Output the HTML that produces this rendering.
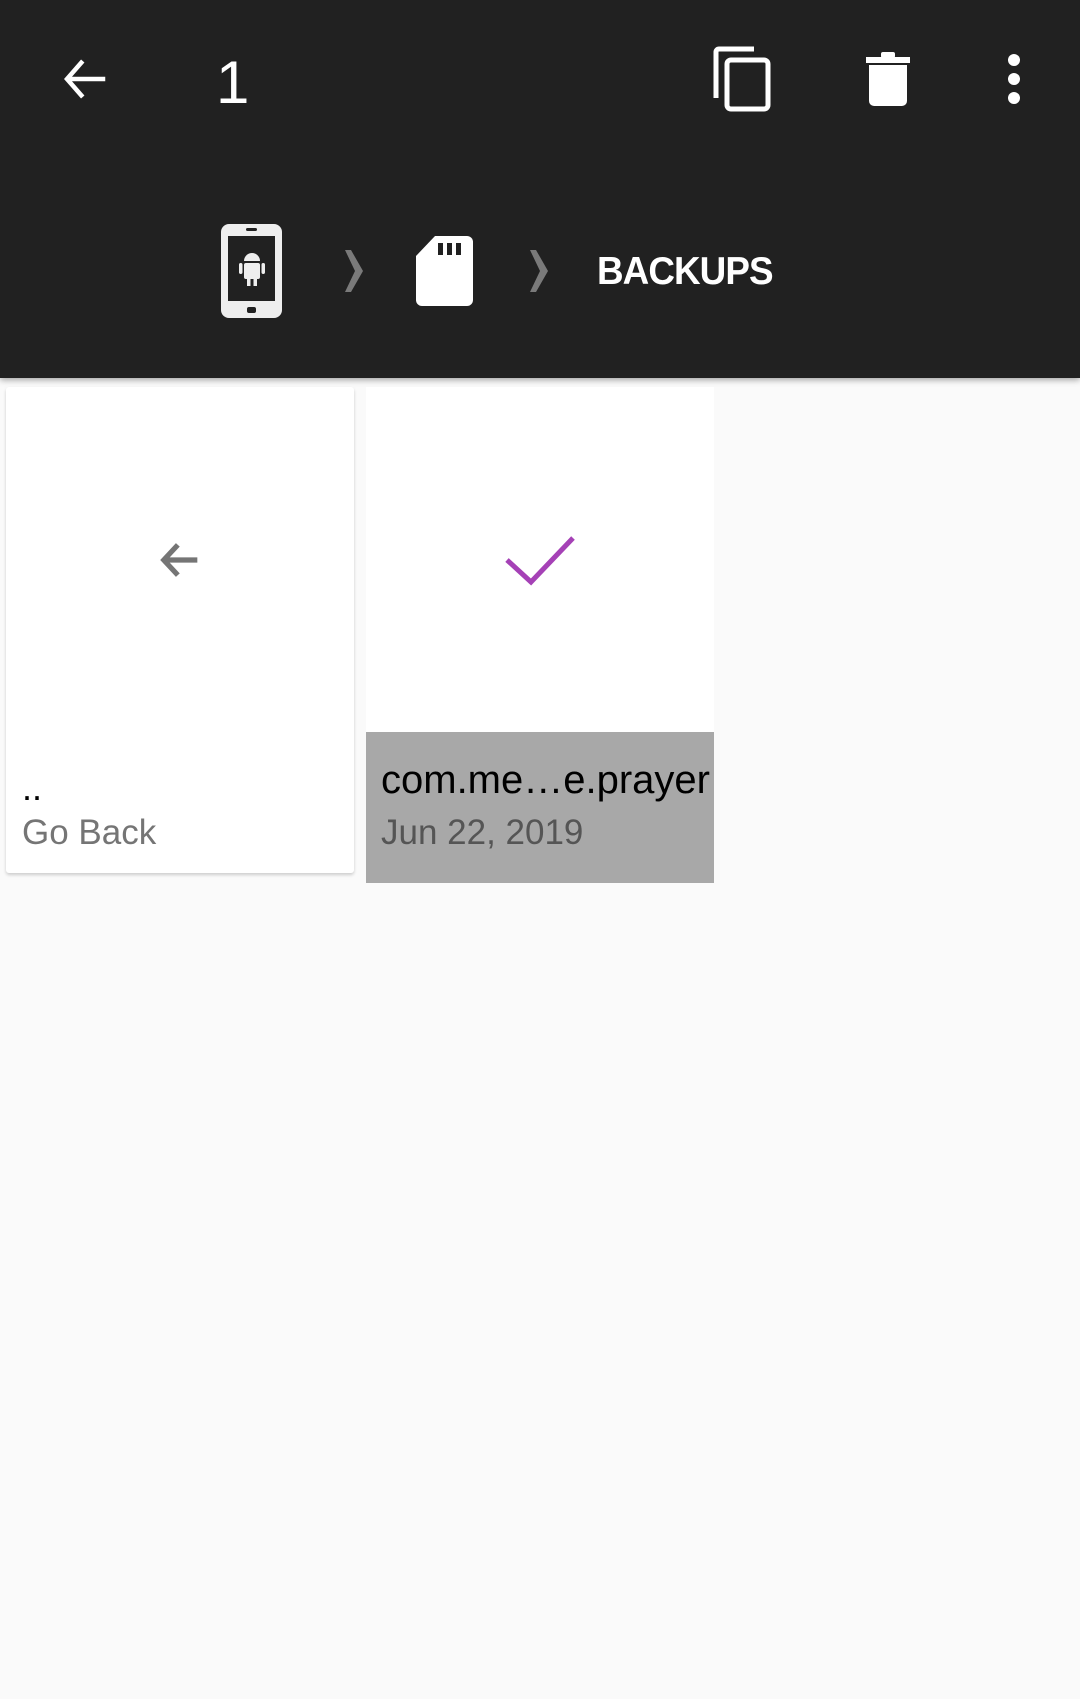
<!DOCTYPE html>
<html><head><meta charset="utf-8"><style>
body{margin:0;width:1080px;height:1699px;background:#fafafa;font-family:"Liberation Sans",sans-serif;position:relative;overflow:hidden}
.hdr{position:absolute;left:0;top:0;width:1080px;height:378px;background:#212121;box-shadow:0 2px 6px rgba(0,0,0,.35)}
.a{position:absolute}
.card{position:absolute;top:387px;width:348px;background:#fff}
</style></head><body>
<div class="hdr">
<svg class="a" style="left:58px;top:52px" width="54" height="54" viewBox="0 0 24 24"><path d="M21 12H4M11 4L4 12l7 8" stroke="#fff" stroke-width="2" fill="none"/></svg>
<div class="a" style="left:216px;top:48px;color:#fff;font-size:60px">1</div>
<svg class="a" style="left:712px;top:46px" width="60" height="66" viewBox="0 0 60 66"><path d="M4 52V6a3 3 0 0 1 3-3h35" stroke="#fff" stroke-width="5" fill="none"/><rect x="15" y="14" width="41" height="49" rx="4" stroke="#fff" stroke-width="5" fill="none"/></svg>
<svg class="a" style="left:866px;top:52px" width="44" height="54" viewBox="0 0 44 54"><rect x="0" y="5" width="44" height="6" fill="#fff"/><rect x="15" y="0" width="14" height="6" rx="2" fill="#fff"/><path d="M3 13h38v36a5 5 0 0 1-5 5H8a5 5 0 0 1-5-5z" fill="#fff"/></svg>
<svg class="a" style="left:1006px;top:54px" width="16" height="50" viewBox="0 0 16 50"><ellipse cx="8" cy="6" rx="6" ry="6" fill="#fff"/><ellipse cx="8" cy="25" rx="6" ry="6" fill="#fff"/><ellipse cx="8" cy="44" rx="6" ry="6" fill="#fff"/></svg>
<svg class="a" style="left:220px;top:223px" width="63" height="96" viewBox="0 0 63 96"><rect x="1" y="1" width="61" height="94" rx="8" fill="#eee"/><rect x="8" y="13" width="47" height="65" fill="#212121"/><rect x="26" y="5" width="11" height="3" rx="1.5" fill="#212121"/><rect x="27" y="84" width="9" height="6" rx="2" fill="#212121"/><path d="M24 38a8 8 0 0 1 16 0z" fill="#eee"/><rect x="24" y="40" width="16" height="16" rx="2" fill="#eee"/><rect x="19" y="40" width="3.5" height="11" rx="1.7" fill="#eee"/><rect x="41.5" y="40" width="3.5" height="11" rx="1.7" fill="#eee"/><rect x="27" y="55" width="3.5" height="8" fill="#eee"/><rect x="33.5" y="55" width="3.5" height="8" fill="#eee"/></svg>
<svg class="a" style="left:343px;top:250px" width="22" height="42" viewBox="0 0 22 42"><path d="M2 0h6l12 21L8 42H2l10-21z" fill="#7a7a7a"/></svg>
<svg class="a" style="left:416px;top:236px" width="57" height="70" viewBox="0 0 57 70"><path d="M19 0h32a6 6 0 0 1 6 6v58a6 6 0 0 1-6 6H6a6 6 0 0 1-6-6V20z" fill="#fff"/><rect x="22" y="7" width="5" height="12" fill="#212121"/><rect x="31" y="7" width="5" height="12" fill="#212121"/><rect x="40" y="7" width="5" height="12" fill="#212121"/></svg>
<svg class="a" style="left:528px;top:250px" width="22" height="42" viewBox="0 0 22 42"><path d="M2 0h6l12 21L8 42H2l10-21z" fill="#7a7a7a"/></svg>
<div class="a" style="left:597px;top:250px;color:#fff;font-size:39px;font-weight:bold;letter-spacing:-1px;transform:scaleX(0.945);transform-origin:0 0">BACKUPS</div>
</div>
<div class="card" style="left:6px;height:486px;box-shadow:0 2px 3px rgba(0,0,0,.18);border-radius:3px">
<svg class="a" style="left:148px;top:147px" width="52" height="52" viewBox="0 0 24 24"><path d="M20 12H4.5M11 5l-6.5 7 6.5 7" stroke="#757575" stroke-width="2.4" fill="none"/></svg>
<div class="a" style="left:16px;top:380px;font-size:36px;color:#000">..</div>
<div class="a" style="left:16px;top:426px;font-size:35px;color:#757575">Go Back</div>
</div>
<div class="card" style="left:366px;height:496px">
<svg class="a" style="left:138px;top:146px" width="72" height="54" viewBox="0 0 72 54"><path d="M3 27l24 22L69 5" stroke="#a541b6" stroke-width="5" fill="none"/></svg>
<div class="a" style="left:0;top:345px;width:348px;height:151px;background:#a8a8a8"></div>
<div class="a" style="left:15px;top:371px;font-size:40px;color:#000;letter-spacing:0;white-space:nowrap">com.me…e.prayer</div>
<div class="a" style="left:15px;top:426px;font-size:35px;color:#555">Jun 22, 2019</div>
</div>
</body></html>
